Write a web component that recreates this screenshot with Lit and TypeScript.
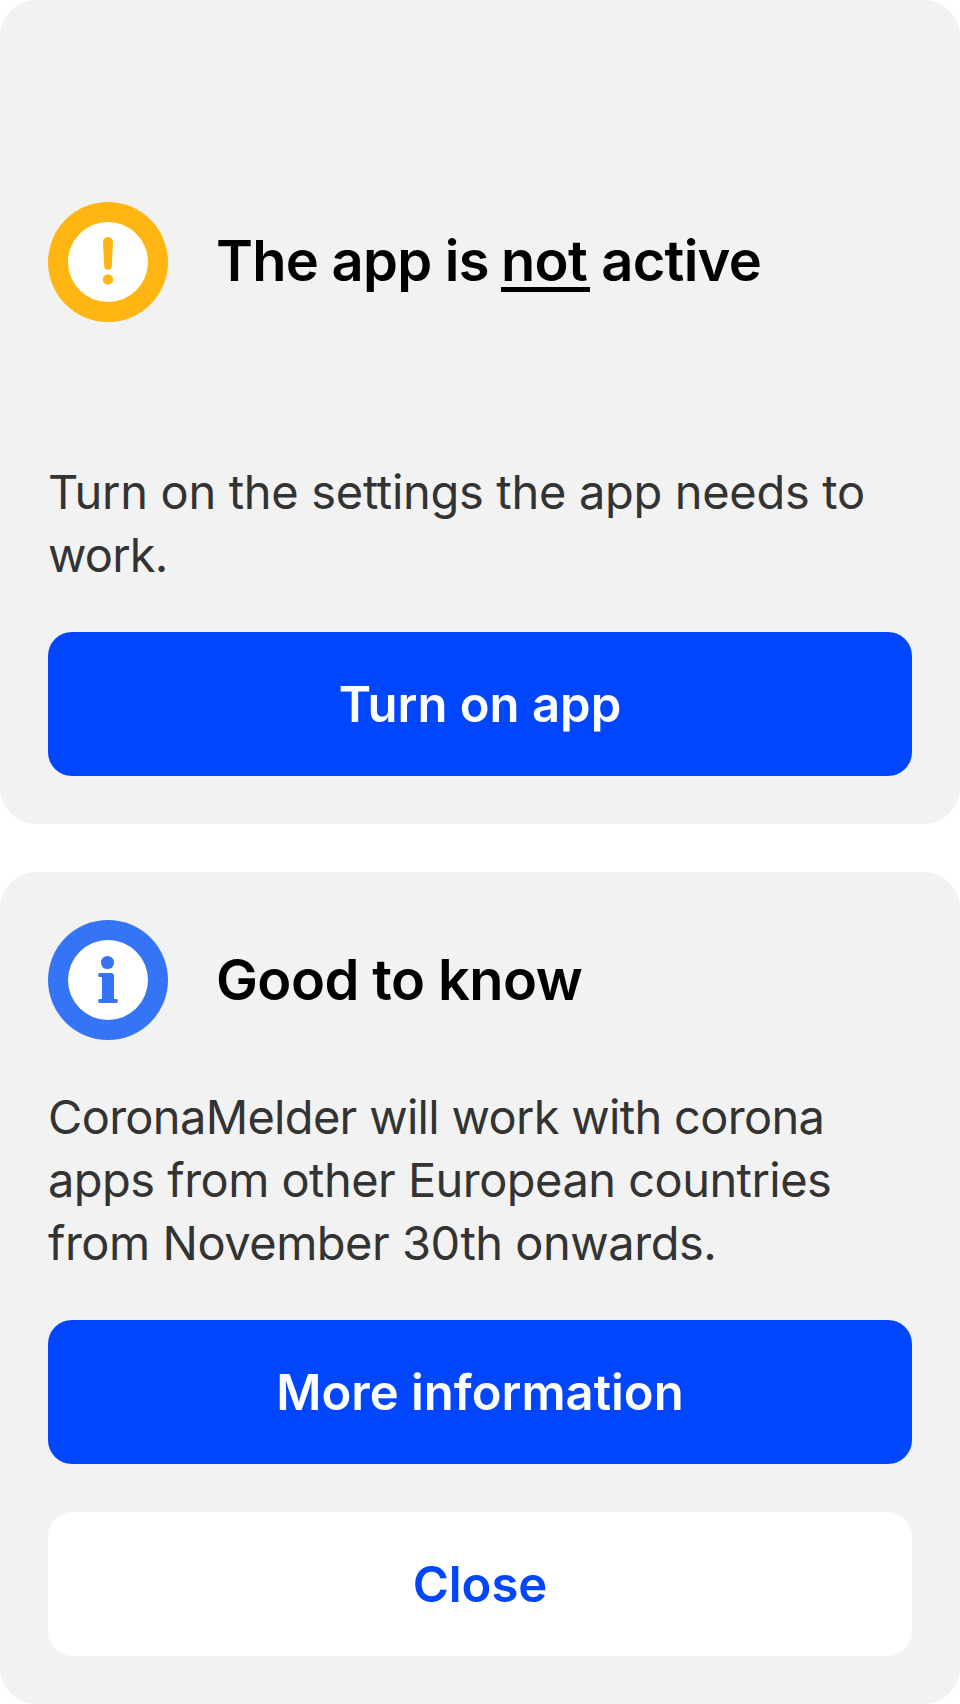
import { LitElement, html, css } from "lit";
import { customElement } from "lit/decorators.js";

@customElement("app-root")
export class AppRoot extends LitElement {
  static styles = css`
    :host { display: flex; flex-direction: column; gap: 48px; height: 1704px; background: #fff; font-family: Inter, sans-serif; color: #333; }
    * { box-sizing: border-box; }
    section { background: #f2f2f2; border-radius: 36px; padding: 48px; display: flex; flex-direction: column; }
    .status { height: 824px; padding-top: 202px; }
    .info { height: 832px; }
    header { display: flex; align-items: center; gap: 48px; height: 120px; }
    svg { width: 120px; height: 120px; flex: none; }
    h2 { margin: 0; font-size: 56px; line-height: 68px; font-weight: 600; color: #000; white-space: nowrap; letter-spacing: -0.58px; }
    .status h2 { padding-bottom: 2px; letter-spacing: -0.74px; }
    .not { padding: 0 3px 0 0; margin: 0 -2px 0 -1px; background: linear-gradient(#000, #000) 0 60px / 100% 5px no-repeat; }
    p { margin: 0; font-size: 47px; line-height: 63px; white-space: nowrap; display: flex; flex-direction: column; }
    .l1 { letter-spacing: -0.31px; }
    .l2 { letter-spacing: -0.8px; }
    .l3 { letter-spacing: -0.69px; }
    .l4 { letter-spacing: -0.54px; }
    .l5 { letter-spacing: -0.48px; }
    .status p { margin-top: 138px; }
    .info p { margin-top: 45px; }
    button { border: 0; border-radius: 24px; height: 144px; flex: none; font: 600 49px/60px Inter, sans-serif; background: #0046ff; color: #fff; padding: 2px 0 0; }
    .status button { margin-top: 46px; }
    .info .more { margin-top: 46px; }
    .info .close { margin-top: 48px; background: #fff; color: #0046ff; }
  `;
  render() {
    return html`
      <section class="status">
        <header>
          <svg viewBox="0 0 120 120"><circle cx="60" cy="60" r="60" fill="#ffb612"/><circle cx="60" cy="60" r="40" fill="#fff"/><path d="M55 40a5 5 0 0 1 10 0l-1.200 24a3.800 3.800 0 0 1-7.600 0z" fill="#ffb612"/><circle cx="60" cy="77.400" r="5.200" fill="#ffb612"/></svg>
          <h2>The app is <span class="not">not</span> active</h2>
        </header>
        <p><span class="l1">Turn on the settings the app needs to</span><span class="l2">work.</span></p>
        <button>Turn on app</button>
      </section>
      <section class="info">
        <header>
          <svg viewBox="0 0 120 120"><circle cx="60" cy="60" r="60" fill="#3574f7"/><circle cx="60" cy="60" r="40" fill="#fff"/><g fill="#3574f7"><circle cx="59.500" cy="42.500" r="6.600"/><path d="M52 53H63a3 3 0 0 1 3 3V79H68a2 2 0 0 1 0 4H52a2 2 0 0 1 0-4H54V57H52a2 2 0 0 1 0-4z"/></g></svg>
          <h2>Good to know</h2>
        </header>
        <p><span class="l3">CoronaMelder will work with corona</span><span class="l4">apps from other European countries</span><span class="l5">from November 30th onwards.</span></p>
        <button class="more">More information</button>
        <button class="close">Close</button>
      </section>`;
  }
}
